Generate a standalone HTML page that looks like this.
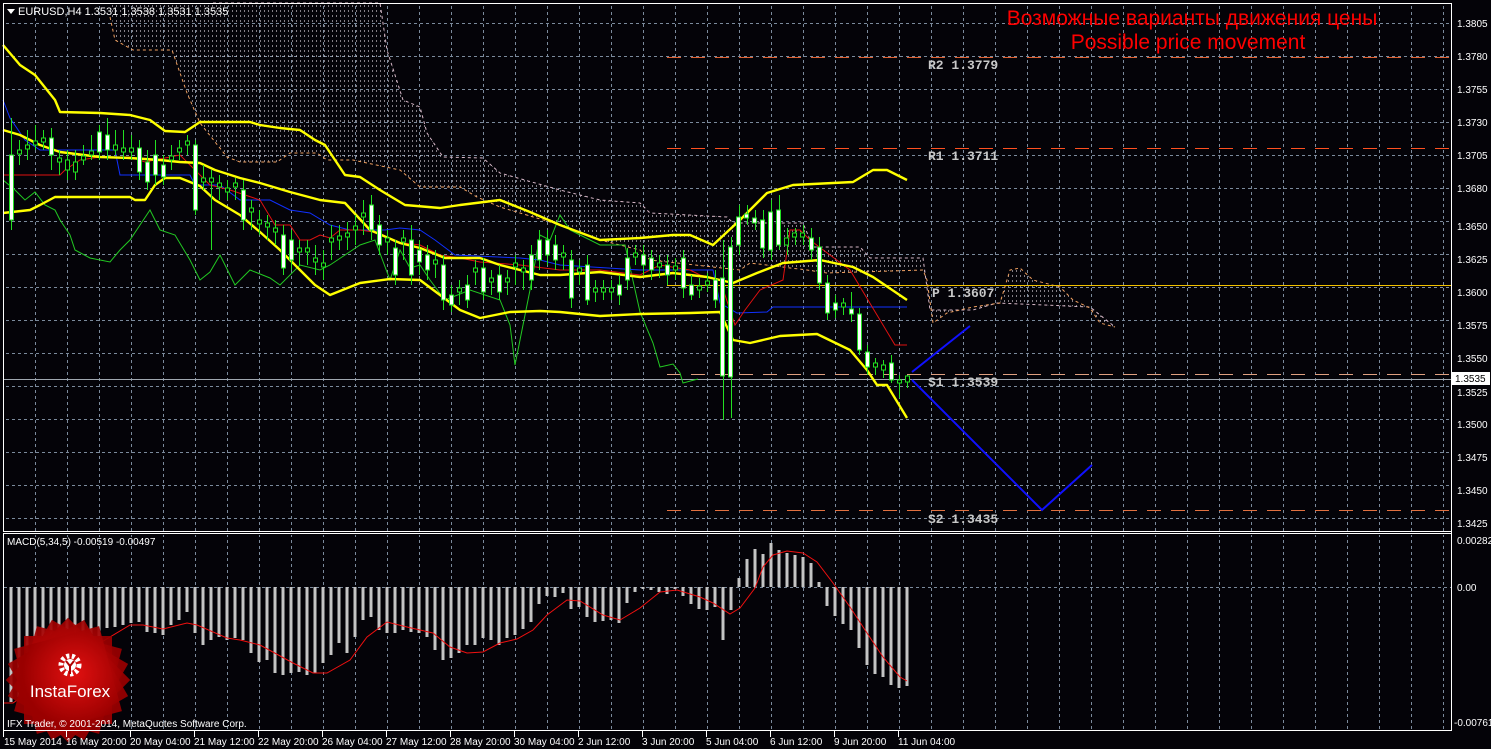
<!DOCTYPE html>
<html><head><meta charset="utf-8"><style>
html,body{margin:0;padding:0;background:#040308;}
svg{display:block;font-family:"Liberation Sans",sans-serif;}
</style></head><body>
<svg width="1491" height="749" viewBox="0 0 1491 749" xmlns="http://www.w3.org/2000/svg">
<defs>
<pattern id="gv" x="35" y="0" width="32" height="749" patternUnits="userSpaceOnUse">
<line x1="0.5" y1="0" x2="0.5" y2="749" stroke="#7b8a9c" stroke-dasharray="3 3" stroke-width="1"/>
</pattern>
<pattern id="gh" x="0" y="23" width="1491" height="33" patternUnits="userSpaceOnUse">
<line x1="0" y1="0.5" x2="1491" y2="0.5" stroke="#7b8a9c" stroke-dasharray="3 3" stroke-width="1"/>
</pattern>
<pattern id="dots" x="0" y="0" width="4" height="5" patternUnits="userSpaceOnUse">
<rect x="0" y="0" width="1" height="2" fill="#d8d0d8"/>
</pattern>
<radialGradient id="rg" cx="0.45" cy="0.4" r="0.6">
<stop offset="0" stop-color="#e01010" stop-opacity="0.95"/>
<stop offset="1" stop-color="#9a0000" stop-opacity="0.92"/>
</radialGradient>
</defs>
<rect width="1491" height="749" fill="#040308"/>
<rect x="4" y="4" width="1447" height="527" fill="url(#gv)"/>
<rect x="4" y="4" width="1447" height="527" fill="url(#gh)"/>
<rect x="4" y="535" width="1447" height="195" fill="url(#gv)"/>
<line x1="4" y1="587.5" x2="1451" y2="587.5" stroke="#7b8a9c" stroke-dasharray="3 3"/>

<polygon fill="url(#dots)" opacity="0.6" points="110,3 380,3 387,50 403,100 420,107 427,133 443,157 483,158 500,173 560,190 600,200 640,203 650,213 727,217 733,223 803,223 813,247 860,247 870,258 923,258 930,310 973,310 997,303 1090,307 1115,327 1100,323 1090,308 1073,300 1060,287 1033,280 1020,268 1010,270 1000,303 973,307 947,313 933,323 927,280 923,270 827,273 807,270 750,263 740,270 650,260 640,250 600,240 560,225 500,207 477,197 460,187 420,187 400,170 353,160 327,160 317,153 290,153 277,162 240,162 227,157 200,123 187,93 172,50 133,50 115,40 110,3"/>
<polyline fill="none" stroke="#d8b8c8" stroke-dasharray="3 3" points="213,3 380,3 387,50 403,100 420,107 427,133 443,157 483,158 500,173 560,190 600,200 640,203 650,213 727,217 733,223 803,223 813,247 860,247 870,258 923,258 930,310 973,310 997,303 1090,307 1115,327"/>
<polyline fill="none" stroke="#f0a060" stroke-dasharray="3 3" points="110,17 115,40 133,50 172,50 187,93 200,123 227,157 240,162 277,162 290,153 317,153 327,160 353,160 400,170 420,187 460,187 477,197 500,207 560,225 600,240 640,250 650,260 740,270 750,263 807,270 827,273 923,270 927,280 933,323 947,313 973,307 1000,303 1010,270 1020,268 1033,280 1060,287 1073,300 1090,308 1100,323 1115,327"/>

<line x1="667" y1="57.5" x2="1451" y2="57.5" stroke="#e06030" stroke-dasharray="14 10"/>
<line x1="667" y1="148.5" x2="1451" y2="148.5" stroke="#ff5020" stroke-dasharray="14 10"/>
<line x1="667" y1="285.5" x2="1451" y2="285.5" stroke="#f0c000"/>
<line x1="667" y1="374.5" x2="1451" y2="374.5" stroke="#e0a080" stroke-dasharray="14 10"/>
<line x1="667" y1="510.5" x2="1451" y2="510.5" stroke="#e07040" stroke-dasharray="14 10"/>
<line x1="4" y1="379.5" x2="1451" y2="379.5" stroke="#a0a8b0"/>
<g font-family="Liberation Mono,monospace" font-size="13" fill="#c8c8c8" font-weight="bold">
<text x="928" y="69">R2 1.3779</text>
<text x="928" y="160">R1 1.3711</text>
<text x="932" y="297">P 1.3607</text>
<text x="928" y="386">S1 1.3539</text>
<text x="928" y="523">S2 1.3435</text>
</g>

<polyline fill="none" stroke="#22c822" stroke-width="1" points="3,180 15,190 25,200 35,192 45,205 55,210 60,220 70,235 75,250 90,258 110,262 120,250 130,240 140,225 150,210 160,230 175,235 190,260 200,280 210,272 220,255 235,285 250,270 270,278 280,285 300,265 320,270 330,265 345,255 360,245 375,240 390,280 400,250 410,268 420,265 430,280 445,300 470,290 500,300 510,325 515,365 520,340 530,290 540,235 550,240 560,215 570,230 600,245 625,245 640,312 653,343 660,367 673,364 680,373 683,383 698,379"/>
<polyline fill="none" stroke="#1030ff" stroke-width="1" points="3,100 10,118 25,140 40,150 115,150 120,175 190,175 195,185 220,185 240,200 270,200 290,210 310,213 330,225 350,230 385,230 400,228 420,230 435,240 455,255 520,258 540,260 560,265 640,270 713,270 720,303 737,313 767,312 773,307 907,307"/>
<polyline fill="none" stroke="#e01010" stroke-width="1" points="3,175 60,175 65,170 80,160 100,157 130,157 145,162 165,158 180,155 195,170 210,185 230,190 260,200 275,225 290,225 300,240 310,240 320,235 330,238 340,230 360,230 380,233 395,242 420,245 440,255 460,258 480,262 520,265 560,270 600,270 640,275 660,265 690,270 700,275 720,280 735,325 745,310 760,290 783,280 790,230 800,230 810,240 830,255 850,270 865,295 880,320 895,345 907,345"/>
<g fill="none" stroke="#ffff00" stroke-width="2.4" stroke-linejoin="round">
<polyline points="3,45 20,65 35,75 55,100 60,112 100,113 130,115 150,120 165,131 185,132 200,122 250,122 260,125 280,128 300,130 315,140 325,145 345,175 360,177 380,190 405,205 440,208 460,205 500,200 530,212 560,225 600,240 640,238 673,235 690,235 713,245 740,220 767,193 793,185 853,182 873,170 887,170 907,180"/>
<polyline points="3,130 20,135 40,145 60,152 100,157 130,158 160,160 180,162 200,163 215,170 240,178 260,183 290,192 320,200 345,203 370,230 400,243 420,248 445,258 480,258 500,265 540,275 560,275 600,272 640,277 673,273 707,277 733,283 757,273 783,263 820,260 853,267 873,277 907,300"/>
<polyline points="3,213 30,210 40,205 55,197 130,197 135,200 145,200 155,185 165,178 180,178 200,186 215,200 240,215 260,232 280,250 300,270 315,285 330,295 360,283 390,279 420,280 440,295 460,310 480,318 510,312 540,311 560,312 600,316 640,314 690,313 720,312 733,340 750,343 780,336 817,334 850,350 867,370 877,385 887,385 907,418"/>
</g>

<g stroke="#22e022" stroke-width="1" fill="#fff">
<path fill="none" d="M11.5 118V230M19.5 140V165M27.5 130V160M35.5 125V150M43.5 130V150M51.5 128V170M59.5 150V175M67.5 150V180M75.5 150V180M83.5 145V165M91.5 135V160M99.5 125V160M107.5 118V160M115.5 130V155M123.5 130V160M131.5 135V160M139.5 140V180M147.5 150V190M155.5 140V185M163.5 155V185M171.5 145V170M179.5 140V160M187.5 135V155M195.5 140V215M203.5 165V190M211.5 170V250M219.5 175V200M227.5 180V200M235.5 178V200M243.5 180V230M251.5 200V230M259.5 210V235M267.5 215V240M275.5 220V245M283.5 225V275M291.5 230V270M299.5 240V265M307.5 240V265M315.5 245V275M323.5 250V280M331.5 225V260M339.5 225V250M347.5 222V250M355.5 215V245M363.5 200V235M371.5 195V240M379.5 215V255M387.5 230V255M395.5 240V285M403.5 230V260M411.5 225V285M419.5 240V275M427.5 245V280M435.5 250V278M443.5 255V310M451.5 285V312M459.5 280V305M467.5 275V308M475.5 260V285M483.5 258V300M491.5 270V295M499.5 265V300M507.5 270V295M515.5 255V285M523.5 260V290M531.5 245V290M539.5 230V270M547.5 230V265M555.5 235V270M563.5 245V270M571.5 250V308M579.5 260V285M587.5 255V305M595.5 280V302M603.5 280V300M611.5 280V300M619.5 275V305M627.5 248V290M635.5 245V265M643.5 245V275M651.5 250V280M659.5 255V278M667.5 255V285M675.5 258V280M683.5 250V298M691.5 275V300M699.5 278V298M707.5 273V292M715.5 270V308M723.5 240V420M731.5 237V418M739.5 205V255M747.5 205V225M755.5 210V230M763.5 210V258M771.5 200V260M779.5 195V250M787.5 228V255M795.5 228V245M803.5 225V245M811.5 228V260M819.5 237V290M827.5 275V320M835.5 295V318M843.5 298V315M851.5 292V322M859.5 308V355M867.5 345V375M875.5 358V375M883.5 360V378M891.5 355V383M899.5 375V398M907.5 375V388"/>
<path d="M9.5 155h4v65h-4zM49.5 138h4v17h-4zM97.5 132h4v20h-4zM105.5 135h4v15h-4zM137.5 148h4v24h-4zM145.5 162h4v20h-4zM153.5 155h4v20h-4zM161.5 165h4v12h-4zM193.5 145h4v65h-4zM241.5 190h4v30h-4zM281.5 235h4v33h-4zM289.5 240h4v20h-4zM369.5 205h4v25h-4zM377.5 225h4v20h-4zM393.5 248h4v27h-4zM409.5 240h4v35h-4zM417.5 250h4v12h-4zM425.5 255h4v15h-4zM441.5 265h4v35h-4zM449.5 295h4v10h-4zM465.5 285h4v15h-4zM481.5 268h4v24h-4zM497.5 275h4v17h-4zM529.5 255h4v25h-4zM537.5 240h4v20h-4zM545.5 240h4v15h-4zM553.5 245h4v15h-4zM569.5 260h4v38h-4zM585.5 265h4v35h-4zM617.5 285h4v10h-4zM625.5 258h4v22h-4zM641.5 255h4v10h-4zM649.5 258h4v12h-4zM665.5 265h4v10h-4zM681.5 258h4v30h-4zM689.5 285h4v10h-4zM713.5 280h4v20h-4zM720.5 278h4v98h-4zM728.5 247h4v130h-4zM736.5 217h4v28h-4zM744.5 214h4v4h-4zM752.5 218h4v5h-4zM760.5 220h4v28h-4zM768.5 212h4v38h-4zM776.5 210h4v35h-4zM809.5 238h4v12h-4zM817.5 247h4v36h-4zM825.5 283h4v30h-4zM833.5 303h4v7h-4zM849.5 309h4v5h-4zM857.5 314h4v36h-4zM865.5 352h4v15h-4zM889.5 363h4v17h-4z"/>
<path fill="#000" d="M17.5 150h4v4h-4zM25.5 145h4v4h-4zM33.5 141h4v4h-4zM41.5 138h4v4h-4zM57.5 158h4v4h-4zM65.5 160h4v10h-4zM73.5 162h4v10h-4zM81.5 156h4v4h-4zM89.5 151h4v4h-4zM113.5 145h4v5h-4zM121.5 148h4v4h-4zM129.5 148h4v4h-4zM169.5 156h4v4h-4zM177.5 148h4v4h-4zM185.5 141h4v4h-4zM201.5 178h4v4h-4zM209.5 178h4v4h-4zM217.5 183h4v4h-4zM225.5 188h4v4h-4zM233.5 183h4v4h-4zM249.5 208h4v4h-4zM257.5 220h4v4h-4zM265.5 223h4v4h-4zM273.5 228h4v4h-4zM297.5 248h4v4h-4zM305.5 248h4v4h-4zM313.5 258h4v4h-4zM321.5 263h4v4h-4zM329.5 238h4v4h-4zM337.5 236h4v4h-4zM345.5 233h4v4h-4zM353.5 226h4v4h-4zM361.5 213h4v4h-4zM385.5 238h4v4h-4zM401.5 238h4v4h-4zM433.5 260h4v4h-4zM457.5 288h4v4h-4zM473.5 268h4v4h-4zM489.5 278h4v4h-4zM505.5 278h4v4h-4zM513.5 263h4v4h-4zM521.5 268h4v4h-4zM561.5 253h4v4h-4zM577.5 268h4v4h-4zM593.5 288h4v4h-4zM601.5 288h4v4h-4zM609.5 288h4v4h-4zM633.5 253h4v4h-4zM657.5 263h4v4h-4zM673.5 266h4v4h-4zM697.5 286h4v4h-4zM705.5 281h4v4h-4zM784.5 238h4v7h-4zM792.5 233h4v4h-4zM800.5 233h4v4h-4zM841.5 303h4v4h-4zM873.5 363h4v4h-4zM881.5 365h4v5h-4zM897.5 380h4v3h-4zM905.5 376h4v6h-4z"/>
</g>

<polyline fill="none" stroke="#1010ff" stroke-width="2" points="912,372 970,326"/>
<polyline fill="none" stroke="#1010ff" stroke-width="2" points="912,380 1042,510 1092,465"/>

<polygon points="7,9 15,9 11,14" fill="#fff"/>
<text x="18" y="15" font-size="11" fill="#fff">EURUSD,H4  1.3531 1.3538 1.3531 1.3535</text>
<text x="1192" y="25" font-size="21" fill="#ff0000" text-anchor="middle">Возможные варианты движения цены</text>
<text x="1188" y="49" font-size="21" fill="#ff0000" text-anchor="middle">Possible price movement</text>

<path stroke="#c4c4c4" stroke-width="3" fill="none" d="M11 587V702M19 587V697M27 587V687M35 587V677M43 587V663M51 587V655M59 587V650M67 587V647M75 587V643M83 587V643M91 587V642M99 587V637M107 587V628M115 587V627M123 587V625M131 587V623M139 587V622M147 587V632M155 587V633M163 587V635M171 587V625M179 587V620M187 587V612M195 587V633M203 587V645M211 587V640M219 587V637M227 587V640M235 587V638M243 587V640M251 587V653M259 587V662M267 587V660M275 587V673M283 587V675M291 587V673M299 587V672M307 587V675M315 587V673M323 587V663M331 587V655M339 587V643M347 587V653M355 587V637M363 587V620M371 587V617M379 587V630M387 587V633M395 587V633M403 587V630M411 587V632M419 587V633M427 587V637M435 587V650M443 587V660M451 587V658M459 587V653M467 587V645M475 587V645M483 587V638M491 587V640M499 587V645M507 587V638M515 587V635M523 587V629M531 587V622M539 587V604M547 587V596M555 587V597M563 587V593M571 587V609M579 587V607M587 587V617M595 587V622M603 587V621M611 587V620M619 587V623M627 587V603M635 587V592M643 587V589M651 587V590M659 587V592M667 587V594M675 587V589M683 587V596M691 587V604M699 587V609M707 587V610M715 587V607M723 587V640M731 587V610M739 587V578M747 587V559M755 587V549M763 587V554M771 587V543M779 587V550M787 587V553M795 587V555M803 587V557M811 587V563M819 587V582M827 587V606M835 587V616M843 587V624M851 587V630M859 587V648M867 587V665M875 587V674M883 587V677M891 587V685M899 587V688M907 587V686"/>
<polyline fill="none" stroke="#f01010" stroke-width="1" points="3,703 13,703 27,693 47,667 67,652 93,647 110,637 130,625 143,625 163,629 187,623 197,625 227,638 240,640 260,645 293,663 313,673 327,673 350,660 367,637 387,622 407,627 433,633 450,647 467,653 483,652 500,643 517,639 533,630 547,615 567,600 580,601 603,615 620,620 640,608 660,592 677,590 700,597 713,603 730,614 740,608 755,588 763,567 773,555 787,551 803,553 817,562 833,583 850,607 867,633 883,657 900,677 907,681"/>
<text x="7" y="545" font-size="10" fill="#fff">MACD(5,34,5) -0.00519 -0.00497</text>

<g transform="translate(68,680)">
<g fill="url(#rg)">
<rect x="-44" y="-44" width="88" height="88"/>
<rect x="-44" y="-44" width="88" height="88" transform="rotate(15)"/>
<rect x="-44" y="-44" width="88" height="88" transform="rotate(30)"/>
<rect x="-44" y="-44" width="88" height="88" transform="rotate(45)"/>
<rect x="-44" y="-44" width="88" height="88" transform="rotate(60)"/>
<rect x="-44" y="-44" width="88" height="88" transform="rotate(75)"/>
</g>
<circle cx="2" cy="-15" r="9" fill="none" stroke="#fff" stroke-width="5" stroke-dasharray="3 2.5"/>
<circle cx="2" cy="-15" r="6" fill="#fff"/>
<path d="M-2 -19 L2 -14 L6 -19 M2 -14 V-6" stroke="#b00000" stroke-width="2" fill="none"/>
<text x="2" y="17" font-size="17" fill="#fff" text-anchor="middle">InstaForex</text>
</g>
<text x="7" y="727" font-size="10" fill="#fff">IFX Trader, © 2001-2014, MetaQuotes Software Corp.</text>

<g fill="none" stroke="#fff" stroke-width="1">
<rect x="3.5" y="3.5" width="1448" height="528"/>
<rect x="3.5" y="533.5" width="1448" height="197"/>
</g>
<rect x="1452" y="0" width="39" height="749" fill="#040308"/>
<line x1="1451.5" y1="3" x2="1451.5" y2="731" stroke="#fff"/>
<g font-size="10" fill="#fff">
<text x="1457" y="27">1.3805</text><text x="1457" y="60">1.3780</text><text x="1457" y="93">1.3755</text><text x="1457" y="126">1.3730</text><text x="1457" y="159">1.3705</text><text x="1457" y="192">1.3680</text><text x="1457" y="230">1.3650</text><text x="1457" y="263">1.3625</text><text x="1457" y="296">1.3600</text><text x="1457" y="329">1.3575</text><text x="1457" y="362">1.3550</text><text x="1457" y="396">1.3525</text><text x="1457" y="428">1.3500</text><text x="1457" y="461">1.3475</text><text x="1457" y="494">1.3450</text><text x="1457" y="527">1.3425</text>
<text x="1457" y="544">0.00282</text><text x="1457" y="591">0.00</text><text x="1454" y="726">-0.00761</text>
</g>
<rect x="1452" y="372" width="38" height="13" fill="#fff"/>
<text x="1455" y="382" font-size="10" fill="#000">1.3535</text>
<g font-size="10" fill="#fff">
<text x="4" y="745">15 May 2014</text><text x="66" y="745">16 May 20:00</text><text x="130" y="745">20 May 04:00</text><text x="194" y="745">21 May 12:00</text><text x="258" y="745">22 May 20:00</text><text x="322" y="745">26 May 04:00</text><text x="386" y="745">27 May 12:00</text><text x="450" y="745">28 May 20:00</text><text x="514" y="745">30 May 04:00</text><text x="578" y="745">2 Jun 12:00</text><text x="642" y="745">3 Jun 20:00</text><text x="706" y="745">5 Jun 04:00</text><text x="770" y="745">6 Jun 12:00</text><text x="834" y="745">9 Jun 20:00</text><text x="898" y="745">11 Jun 04:00</text>
</g>
<path stroke="#fff" d="M3.5 731V737M66.5 731V737M130.5 731V737M194.5 731V737M258.5 731V737M322.5 731V737M386.5 731V737M450.5 731V737M514.5 731V737M578.5 731V737M642.5 731V737M706.5 731V737M770.5 731V737M834.5 731V737M898.5 731V737"/>
</svg>
</body></html>
